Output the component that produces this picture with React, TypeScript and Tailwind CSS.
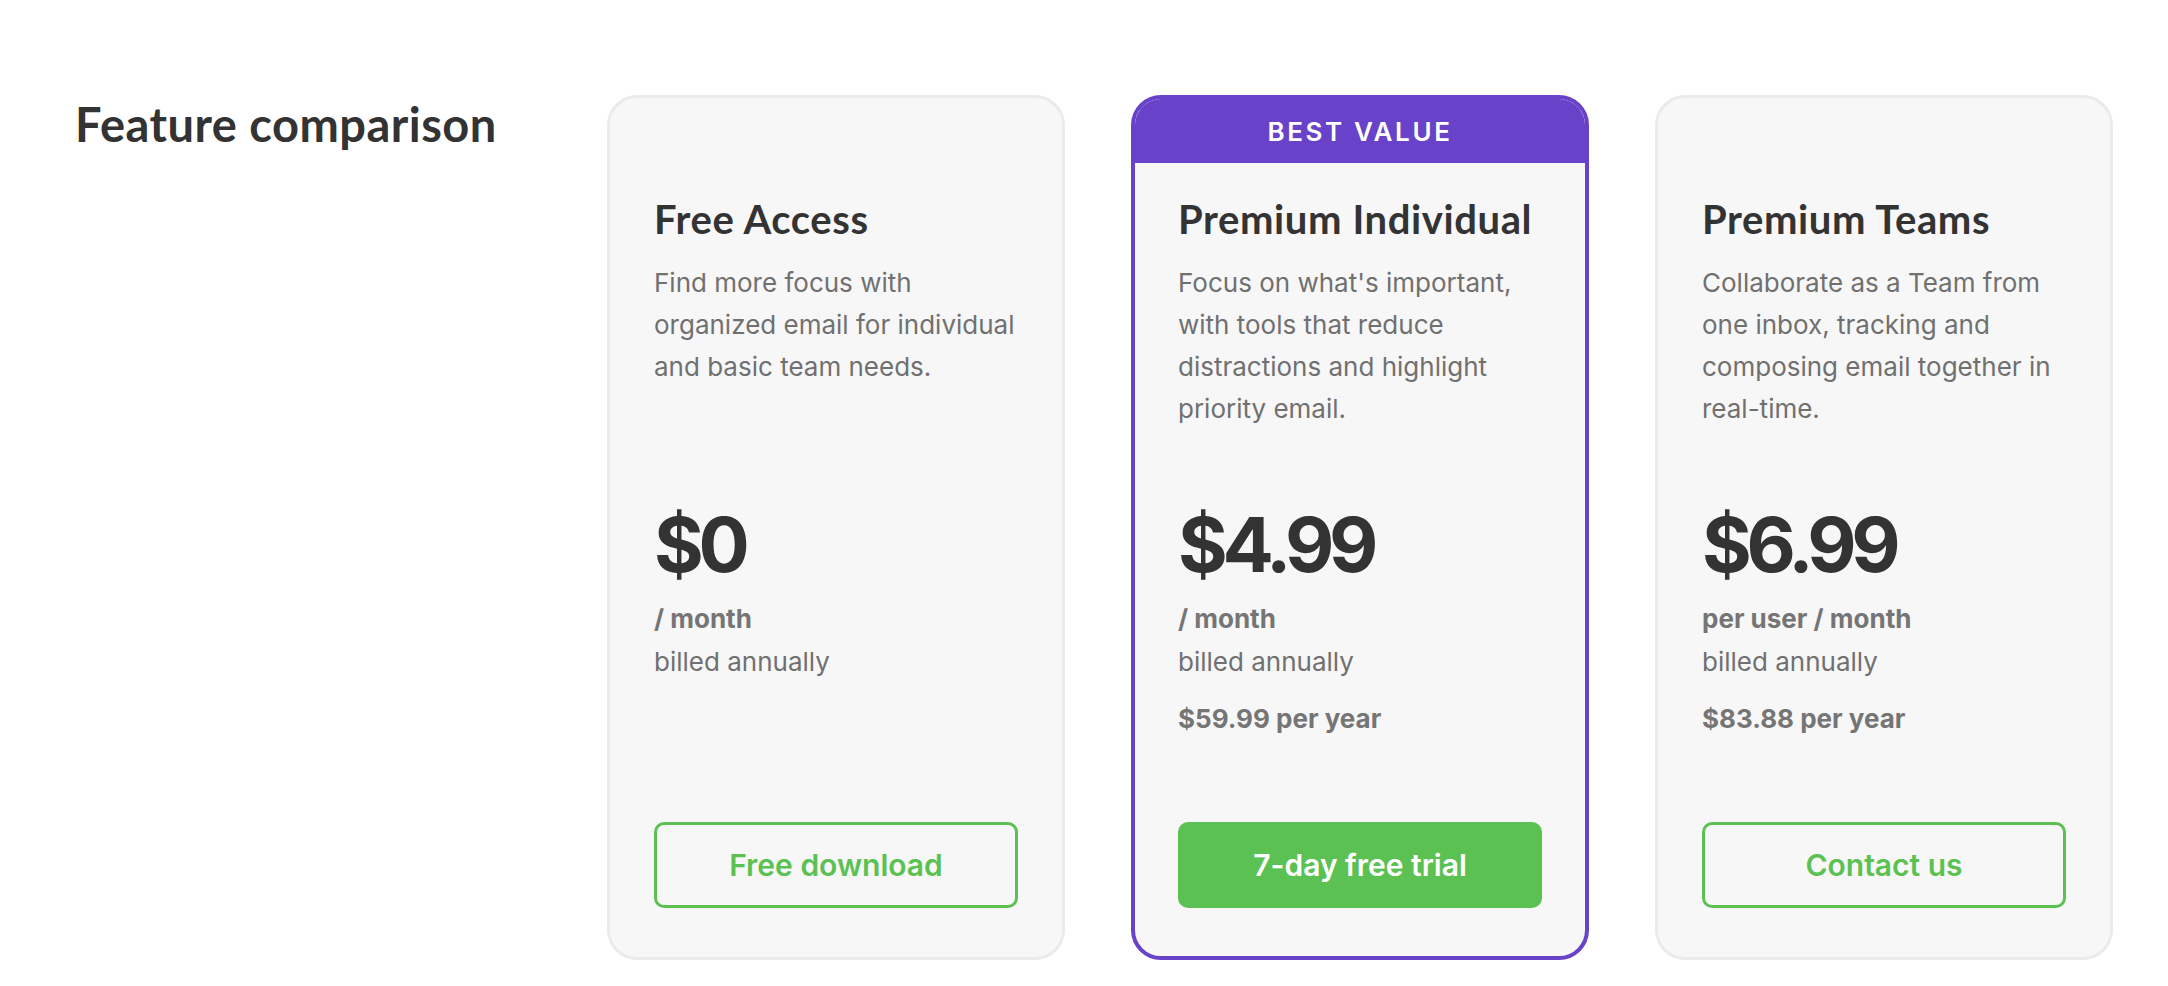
type Plan = {
  name: string;
  description: string;
  price: string;
  period: string;
  yearly?: string;
  cta: string;
  featured?: boolean;
};

const plans: Plan[] = [
  {
    name: 'Free Access',
    description: 'Find more focus with organized email for individual and basic team needs.',
    price: '$0',
    period: '/ month',
    cta: 'Free download',
  },
  {
    name: 'Premium Individual',
    description: "Focus on what's important, with tools that reduce distractions and highlight priority email.",
    price: '$4.99',
    period: '/ month',
    yearly: '$59.99 per year',
    cta: '7-day free trial',
    featured: true,
  },
  {
    name: 'Premium Teams',
    description: 'Collaborate as a Team from one inbox, tracking and composing email together in real-time.',
    price: '$6.99',
    period: 'per user / month',
    yearly: '$83.88 per year',
    cta: 'Contact us',
  },
];

function PlanCard({ plan }: { plan: Plan }) {
  const cardClass = plan.featured
    ? 'relative flex h-[865px] flex-col overflow-hidden rounded-[30px] border-[4px] border-[#6842c8] bg-[#f7f7f7] px-[43px] pt-[96px] pb-[48px]'
    : 'relative flex h-[865px] flex-col rounded-[30px] border-[3px] border-[#ebebeb] bg-[#f7f7f7] px-[44px] pt-[97px] pb-[49px]';

  return (
    <div className={cardClass}>
      {plan.featured && (
        <div className="absolute inset-x-0 top-0 flex h-[64px] items-center justify-center bg-[#6842c8]">
          <span className="text-[26px] font-semibold tracking-[0.1em] text-white">BEST VALUE</span>
        </div>
      )}

      {/* Nom + description */}
      <h3 className="font-['Lato',sans-serif] text-[40px] leading-[48px] font-bold tracking-[0.015em] text-[#333333]">
        {plan.name}
      </h3>
      <p className="mt-[19px] h-[168px] text-[26px] leading-[42px] text-[#707070]">{plan.description}</p>

      {/* Prix */}
      <div className="mt-[76px] text-[76px] leading-[76px] font-bold tracking-[-0.07em] text-[#333333]">
        {plan.price}
      </div>
      <div className="mt-[15px] text-[26px] leading-[43px] font-bold text-[#757575]">{plan.period}</div>
      <div className="text-[26px] leading-[43px] text-[#707070]">billed annually</div>
      {plan.yearly && (
        <div className="mt-[15px] text-[26px] leading-[42px] font-bold text-[#757575]">{plan.yearly}</div>
      )}

      {plan.featured ? (
        <button className="mt-auto h-[86px] w-full rounded-[10px] bg-[#5cc153] text-[30px] font-semibold text-white">
          {plan.cta}
        </button>
      ) : (
        <button className="mt-auto h-[86px] w-full rounded-[10px] border-[3px] border-[#5cc153] text-[30px] font-semibold text-[#5cc153]">
          {plan.cta}
        </button>
      )}
    </div>
  );
}

export default function App() {
  return (
    <div className="min-h-screen w-full bg-white font-['Inter',sans-serif]">
      <div className="flex items-start pt-[95px] pl-[75px]">
        <h2 className="mt-[1px] w-[532px] shrink-0 font-['Lato',sans-serif] text-[47px] leading-[56px] font-bold tracking-[0.01em] text-[#333333]">
          Feature comparison
        </h2>
        <div className="grid grid-cols-[repeat(3,458px)] gap-x-[66px]">
          {plans.map((plan) => (
            <PlanCard key={plan.name} plan={plan} />
          ))}
        </div>
      </div>
    </div>
  );
}
